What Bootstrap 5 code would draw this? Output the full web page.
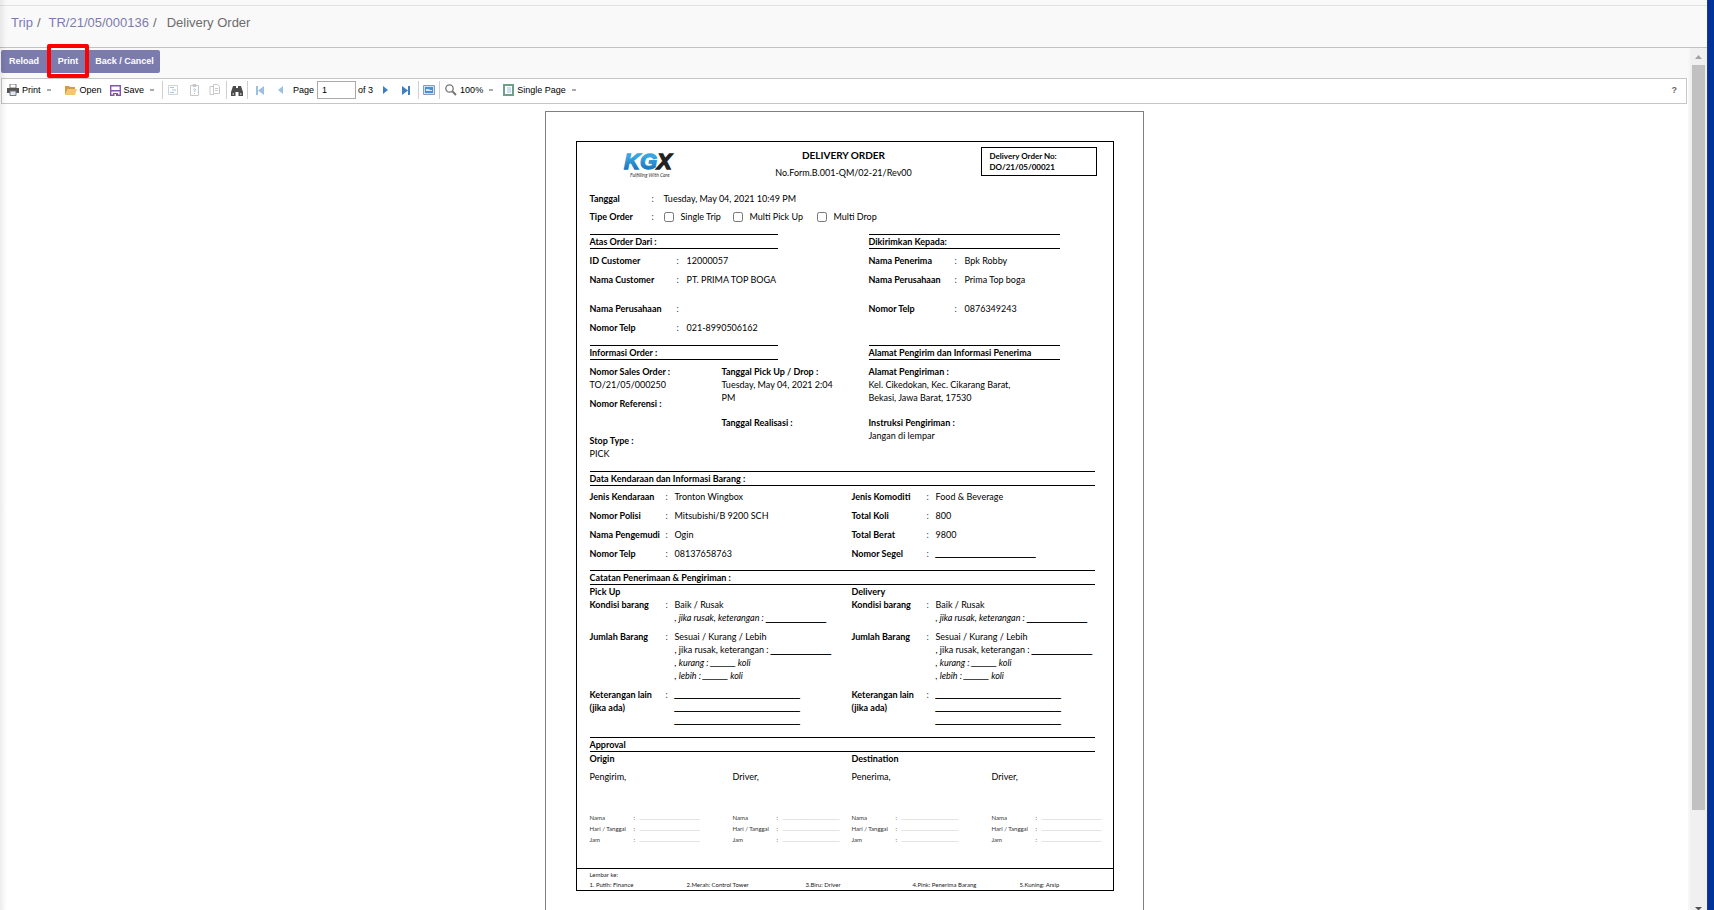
<!DOCTYPE html>
<html lang="id">
<head>
<meta charset="utf-8">
<meta name="viewport" content="width=device-width, initial-scale=1">
<title>Delivery Order</title>
<link href="https://cdn.jsdelivr.net/npm/bootstrap@5.3.0/dist/css/bootstrap.min.css" rel="stylesheet">
<style>
body{font-family:"Liberation Sans",Arial,sans-serif;font-size:9px;color:#000;background:#fff}
.app::before{content:"";position:absolute;left:0;top:0;bottom:0;width:7px;background:linear-gradient(90deg,rgba(0,0,0,.07),transparent);pointer-events:none;z-index:2}
.desktop-edge{width:7px;background:#00339a;border-left:1px solid #173c8c}
.menu-strip{height:6px;background:#f9f9f9;border-bottom:1px solid #e2e2e2}
.crumbs{height:42px;background:#f9f9f9;border-bottom:1px solid #c2c2c2;font-size:13px;padding:0 11px 8px;color:#6c6c6c}
.crumbs a{color:#7c7bad;text-decoration:none}
.crumbs .next{margin-left:10px}
.work{min-height:0}
.actions{background:#f9f9f9;height:30px;padding:2px 1px 0;align-items:flex-start}
.actions .btn{font-size:9px;font-weight:700;line-height:13px;padding:5px 0;height:23px;color:#fff;background:#7c7bad;border:0;border-radius:0;white-space:nowrap}
.actions .btn:first-child{border-radius:2px 0 0 2px;width:46px}
.actions .btn:last-child{border-radius:0 2px 2px 0;width:71px}
.actions .print-wrap{width:42px}
.actions .print-wrap .btn{width:42px;border-radius:0}
.ring{position:absolute;inset:-6px 0 -5px 0;border:4px solid #f00;border-radius:2px;pointer-events:none;z-index:3}
.viewer{border-right:2px solid #f7f7f7;min-width:0}
.tools{height:26px;border:1px solid #c6c6c6;background:#fff;margin:0 1px;padding:0 5px 2px;line-height:13px}
.tools button{border:0;background:none;padding:0;color:#000;display:flex;align-items:center;gap:3px;white-space:nowrap}
.tools button.help{color:#666}
.tools svg{flex:none}
.caret{width:4px;height:2px;background:#aaa;margin-left:3px}
.vsep{width:1px;height:18px;background:#cfcfcf}
.tools input{width:39px;height:18px;border:1px solid #aaa;padding:0 4px;font-size:9px;line-height:13px;border-radius:0;margin:0 2px 0 3px}
.gap-s{margin-left:5px}
.gap-m{margin-left:8px}
.gap-l{margin-left:10px}
.gap-xl{margin-left:14px}
.scrollrail{width:17px;background:#f0f0f0}
.thumb{width:13px;flex:0 0 86.4%;background:#c1c1c1}
.canvas{padding-top:7px}
.paper{width:100%;max-width:599px;min-height:842px;border:1px solid #808080;background:#fff;padding:29px 29px 31px 30px}
.sheet{border:1px solid #000;font-family:Lato,Carlito,sans-serif;font-size:9px;line-height:13px}
.sheet b{font-weight:700}
.inner{padding-left:13px}
.sheet-head{height:50px;display:grid;grid-template-columns:134px 240px 1fr;align-items:start}
.logo{margin:9px 0 0 32px;overflow:visible}
.doc-title{font-size:10px;line-height:14px;font-weight:700;padding-top:6px}
.doc-form{padding-top:4px}
.doc-no{width:116px;height:29px;border:1px solid #000;padding:3px 8px;font-size:8px;line-height:11px;font-weight:700;margin-top:5px}
.g-date{display:grid;grid-template-columns:62px 12px 1fr}
.opt{gap:7px}
.opt-1{width:69px}
.opt-2{width:84px}
.opt input{width:10px;height:10px;border:1px solid #777;border-radius:2px;margin:0;background:#fff}
.two-a{display:grid;grid-template-columns:279px 1fr}
.two-b{display:grid;grid-template-columns:262px 1fr}
.bar{border:solid #000;border-width:1px 0;line-height:13px;font-weight:700;margin-top:11px}
.bar-a{width:188px}
.bar-b{width:191px}
.bar-full{width:505px}
.bar-tight{margin-top:10px}
.kv-a{display:grid;grid-template-columns:87px 10px 1fr;margin-bottom:6px}
.two-a>div+div .kv-a{grid-template-columns:86px 10px 1fr}
.kv-b{display:grid;grid-template-columns:76px 9px 1fr;margin-bottom:6px}
.two-b>div+div .kv-b{grid-template-columns:75px 9px 1fr}
.tall{min-height:23px}
.three{display:grid;grid-template-columns:132px 147px 1fr}
.sp-4{margin-top:4px}
.sp-5{margin-top:5px}
.sp-6{margin-top:6px}
.sp-12{margin-top:12px}
.sp-24{margin-top:24px}
.blank{font-family:"Liberation Sans",Arial,sans-serif;text-shadow:0 0 0 #000,0 0 0 #000}
span .blank,i .blank{line-height:0}
.c{color:#246}
.sign{display:grid;grid-template-columns:143px 119px 140px 1fr}
.small-rows{font-size:6px;line-height:11px;color:#333;margin:29px 0 23px}
.small-rows .trio{display:grid;grid-template-columns:44px 6px 1fr;white-space:nowrap}
.small-rows .blank{color:#bbb;text-shadow:none}
.copies{border-top:1px solid #000;font-size:6px;line-height:11px;color:#222}
.copies-list{display:grid;grid-template-columns:97px 119px 107px 107px 1fr;line-height:10px}
</style>
<script src="https://cdn.jsdelivr.net/npm/bootstrap@5.3.0/dist/js/bootstrap.bundle.min.js"></script>
</head>
<body>
<div class="d-flex vh-100 overflow-hidden">
<div class="app position-relative d-flex flex-column flex-fill overflow-hidden">
  <div class="menu-strip flex-shrink-0"></div>
  <nav class="crumbs d-flex align-items-center flex-shrink-0" aria-label="breadcrumb">
    <a href="#">Trip</a><span class="ms-1">/</span><a href="#" class="ms-2">TR/21/05/000136</a><span class="ms-1">/</span><span class="next">Delivery Order</span>
  </nav>
  <div class="work d-flex flex-fill">
    <main class="viewer flex-fill">
      <div class="actions d-flex">
        <button class="btn" type="button">Reload</button>
        <div class="print-wrap position-relative"><button class="btn" type="button">Print</button><span class="ring"></span></div>
        <button class="btn" type="button">Back / Cancel</button>
      </div>
      <div class="tools d-flex align-items-center">
        <button type="button"><svg width="12" height="12" viewBox="0 0 12 12"><path d="M3 0h6v4H3z" fill="#fff" stroke="#777"/><path d="M0 4h12v5H0z" fill="#555"/><path d="M3 7h6v4.500H3z" fill="#dfeaf5" stroke="#777"/></svg>Print<span class="caret"></span></button>
        <button type="button" class="gap-l ps-1"><svg width="12" height="11" viewBox="0 0 12 11"><path d="M0 10V1h4l1 1h5v2H3z" fill="#d99c3d"/><path d="M0 10l3-6h9l-2 6z" fill="#f6c76f"/></svg>Open</button>
        <button type="button" class="gap-m"><svg width="11" height="11" viewBox="0 0 11 11"><path d="M.7.7h9.600v9.600H.7z" fill="#fff" stroke="#8455a8" stroke-width="1.400"/><path d="M1 5h9v1.500H1zM3 8h5v3H3z" fill="#8455a8"/><path d="M4.500 9H6v2H4.500z" fill="#fff"/></svg>Save<span class="caret"></span></button>
        <span class="vsep gap-m"></span>
        <button type="button" class="ms-1" aria-label="Bookmarks"><svg width="12" height="12" viewBox="0 0 12 12" fill="none"><path d="M1.500 1.500h9v9h-9z" stroke="#d0d3d6"/><path d="M3 3.500h4M5 6h4M3 8.500h4" stroke="#a9c3dc"/></svg></button>
        <button type="button" class="gap-l" aria-label="Parameters"><svg width="12" height="12" viewBox="0 0 12 12" fill="none" stroke="#c8c8c8"><path d="M1.500 1.500h8v10h-8zM4 .5h3v2H4z"/><path d="M4.300 5.500q1.200-1.500 2.400 0L5.500 7v1M5.500 9v1" stroke="#a9c3dc"/></svg></button>
        <button type="button" class="gap-m" aria-label="Resources"><svg width="12" height="12" viewBox="0 0 12 12" fill="none" stroke="#c8c8c8"><path d="M4 2.500H1v8h4M4.500.5h4l2 2v7h-6zM6 4.500h3M6 6.500h3"/></svg></button>
        <span class="vsep gap-s"></span>
        <button type="button" class="ms-1" aria-label="Find"><svg width="12" height="11" viewBox="0 0 12 11" fill="#4c4c4c"><path d="M2 1h3v2h2V1h3l2 6v4H7.500V7h-3v4H0V7z"/><path d="M1.500 8h1.500v2H1.500zM9 8h1.500v2H9z" fill="#aaa"/></svg></button>
        <span class="vsep ms-1"></span>
        <button type="button" class="gap-m" aria-label="First page"><svg width="8" height="9" viewBox="0 0 8 9" fill="#9dbfe0"><path d="M0 0h2v9H0zM8 0v9L2 4.500z"/></svg></button>
        <button type="button" class="gap-xl" aria-label="Previous page"><svg width="5" height="8" viewBox="0 0 5 8" fill="#9dbfe0"><path d="M5 0v8L0 4z"/></svg></button>
        <label for="pg" class="gap-l">Page</label><input id="pg" type="text" value="1"><span>of 3</span>
        <button type="button" class="gap-l" aria-label="Next page"><svg width="5" height="8" viewBox="0 0 5 8" fill="#3f7fc1"><path d="M0 0v8l5-4z"/></svg></button>
        <button type="button" class="gap-xl" aria-label="Last page"><svg width="8" height="9" viewBox="0 0 8 9" fill="#3f7fc1"><path d="M6 0h2v9H6zM0 0v9l6-4.500z"/></svg></button>
        <span class="vsep gap-m"></span>
        <button type="button" class="ms-1" aria-label="Full screen"><svg width="12" height="10" viewBox="0 0 12 10"><path d="M.5.500h11v9H.5z" fill="#cfe0f3" stroke="#8a9cb0"/><path d="M2 2h8v6H2z" fill="#4a90d9"/><path d="M3 4h3l1 1h2v1H3z" fill="#d7e7f8"/></svg></button>
        <span class="vsep ms-1"></span>
        <button type="button" class="gap-s"><svg width="12" height="12" viewBox="0 0 12 12" fill="none" stroke="#777"><circle cx="4.500" cy="4.500" r="3.700" stroke-width="1.300"/><path d="M7.300 7.300l3.700 3.700" stroke-width="2"/></svg>100%<span class="caret"></span></button>
        <button type="button" class="gap-l"><svg width="11" height="12" viewBox="0 0 11 12"><path d="M1 1h9v10H1z" fill="#fff" stroke="#6da08a" stroke-width="2"/><path d="M4 4h4M4 6h4M4 8h4" stroke="#9bbfe0"/></svg>Single Page<span class="caret"></span></button>
        <button type="button" class="help ms-auto me-1 fw-bold">?</button>
      </div>
      <div class="canvas d-flex justify-content-center">
        <article class="paper">
          <div class="sheet">
            <div class="inner">
              <header class="sheet-head">
                <svg class="logo" width="60" height="30" viewBox="0 0 60 30" role="img" aria-label="KGX">
                  <defs><linearGradient id="k" x2="0" y2="1"><stop offset=".3" stop-color="#3aa5e2"/><stop offset="1" stop-color="#0a66ae"/></linearGradient></defs>
                  <text x="2" y="18" font-family="Liberation Sans" font-size="22" font-weight="700" font-style="italic" fill="url(#k)" stroke="url(#k)" stroke-width="1.300">KG<tspan fill="#222" stroke="#222">X</tspan></text>
                  <text x="8" y="26" font-family="Lato" font-size="5" font-style="italic" fill="#333">Fulfilling With Care</text>
                </svg>
                <div class="text-center">
                  <div class="doc-title">DELIVERY ORDER</div>
                  <div class="doc-form">No.Form.B.001-QM/02-21/Rev00</div>
                </div>
                <div class="doc-no ms-auto me-3">Delivery Order No:<br>DO/21/05/00021</div>
              </header>
              <div class="g-date"><b>Tanggal</b><span class="c">:</span><span>Tuesday, May 04, 2021 10:49 PM</span></div>
              <div class="g-date sp-5"><b>Tipe Order</b><span class="c">:</span>
                <div class="d-flex">
                  <label class="opt opt-1 d-flex align-items-center"><input class="form-check-input" type="checkbox">Single Trip</label>
                  <label class="opt opt-2 d-flex align-items-center"><input class="form-check-input" type="checkbox">Multi Pick Up</label>
                  <label class="opt d-flex align-items-center"><input class="form-check-input" type="checkbox">Multi Drop</label>
                </div></div>

              <div class="two-a"><div class="bar bar-a">Atas Order Dari :</div><div class="bar bar-b">Dikirimkan Kepada:</div></div>
              <div class="two-a sp-5">
                <div>
                  <div class="kv-a"><b>ID Customer</b><span class="c">:</span><span>12000057</span></div>
                  <div class="kv-a tall"><b>Nama Customer</b><span class="c">:</span><span>PT. PRIMA TOP BOGA</span></div>
                  <div class="kv-a"><b>Nama Perusahaan</b><span class="c">:</span></div>
                  <div class="kv-a mb-0"><b>Nomor Telp</b><span class="c">:</span><span>021-8990506162</span></div>
                </div>
                <div>
                  <div class="kv-a"><b>Nama Penerima</b><span class="c">:</span><span>Bpk Robby</span></div>
                  <div class="kv-a tall"><b>Nama Perusahaan</b><span class="c">:</span><span>Prima Top boga</span></div>
                  <div class="kv-a"><b>Nomor Telp</b><span class="c">:</span><span>0876349243</span></div>
                </div>
              </div>

              <div class="two-a"><div class="bar bar-a">Informasi Order :</div><div class="bar bar-b">Alamat Pengirim dan Informasi Penerima</div></div>
              <div class="three sp-5">
                <div><b>Nomor Sales Order :</b><br>TO/21/05/000250
                  <div class="sp-6"><b>Nomor Referensi :</b></div>
                  <div class="sp-24"><b>Stop Type :</b><br>PICK</div></div>
                <div><b>Tanggal Pick Up / Drop :</b><br>Tuesday, May 04, 2021 2:04<br>PM
                  <div class="sp-12"><b>Tanggal Realisasi :</b></div></div>
                <div><b>Alamat Pengiriman :</b><br>Kel. Cikedokan, Kec. Cikarang Barat,<br>Bekasi, Jawa Barat, 17530
                  <div class="sp-12"><b>Instruksi Pengiriman :</b><br>Jangan di lempar</div></div>
              </div>

              <div class="bar bar-full">Data Kendaraan dan Informasi Barang :</div>
              <div class="two-b sp-4">
                <div>
                  <div class="kv-b"><b>Jenis Kendaraan</b><span class="c">:</span><span>Tronton Wingbox</span></div>
                  <div class="kv-b"><b>Nomor Polisi</b><span class="c">:</span><span>Mitsubishi/B 9200 SCH</span></div>
                  <div class="kv-b"><b>Nama Pengemudi</b><span class="c">:</span><span>Ogin</span></div>
                  <div class="kv-b mb-0"><b>Nomor Telp</b><span class="c">:</span><span>08137658763</span></div>
                </div>
                <div>
                  <div class="kv-b"><b>Jenis Komoditi</b><span class="c">:</span><span>Food &amp; Beverage</span></div>
                  <div class="kv-b"><b>Total Koli</b><span class="c">:</span><span>800</span></div>
                  <div class="kv-b"><b>Total Berat</b><span class="c">:</span><span>9800</span></div>
                  <div class="kv-b mb-0"><b>Nomor Segel</b><span class="c">:</span><span class="blank">____________________</span></div>
                </div>
              </div>

              <div class="bar bar-full bar-tight">Catatan Penerimaan &amp; Pengiriman :</div>
              <div class="two-b">
                <div><b>Pick Up</b>
                  <div class="kv-b"><b>Kondisi barang</b><span class="c">:</span><span>Baik / Rusak<br><i>, jika rusak, keterangan : </i><span class="blank">____________</span></span></div>
                  <div class="kv-b"><b>Jumlah Barang</b><span class="c">:</span><span>Sesuai / Kurang / Lebih<br>, jika rusak, keterangan : <span class="blank">____________</span><br><i>, kurang : <span class="blank">_____</span> koli<br>, lebih : <span class="blank">_____</span> koli</i></span></div>
                  <div class="kv-b mb-0"><b>Keterangan lain<br>(jika ada)</b><span class="c">:</span><span class="blank">_________________________<br>_________________________<br>_________________________</span></div>
                </div>
                <div><b>Delivery</b>
                  <div class="kv-b"><b>Kondisi barang</b><span class="c">:</span><span>Baik / Rusak<br><i>, jika rusak, keterangan : </i><span class="blank">____________</span></span></div>
                  <div class="kv-b"><b>Jumlah Barang</b><span class="c">:</span><span>Sesuai / Kurang / Lebih<br>, jika rusak, keterangan : <span class="blank">____________</span><br><i>, kurang : <span class="blank">_____</span> koli<br>, lebih : <span class="blank">_____</span> koli</i></span></div>
                  <div class="kv-b mb-0"><b>Keterangan lain<br>(jika ada)</b><span class="c">:</span><span class="blank">_________________________<br>_________________________<br>_________________________</span></div>
                </div>
              </div>

              <div class="bar bar-full bar-tight">Approval</div>
              <div class="two-b"><b>Origin</b><b>Destination</b></div>
              <div class="sign sp-5"><span>Pengirim,</span><span>Driver,</span><span>Penerima,</span><span>Driver,</span></div>
              <div class="sign small-rows">
                <div class="trio"><span>Nama</span><span>:</span><span class="blank">__________________</span><span>Hari / Tanggal</span><span>:</span><span class="blank">__________________</span><span>Jam</span><span>:</span><span class="blank">__________________</span></div>
                <div class="trio"><span>Nama</span><span>:</span><span class="blank">_________________</span><span>Hari / Tanggal</span><span>:</span><span class="blank">_________________</span><span>Jam</span><span>:</span><span class="blank">_________________</span></div>
                <div class="trio"><span>Nama</span><span>:</span><span class="blank">_________________</span><span>Hari / Tanggal</span><span>:</span><span class="blank">_________________</span><span>Jam</span><span>:</span><span class="blank">_________________</span></div>
                <div class="trio"><span>Nama</span><span>:</span><span class="blank">__________________</span><span>Hari / Tanggal</span><span>:</span><span class="blank">__________________</span><span>Jam</span><span>:</span><span class="blank">__________________</span></div>
              </div>
            </div>
            <footer class="copies"><div class="inner">Lembar ke:
              <div class="copies-list"><span>1. Putih: Finance</span><span>2.Merah: Control Tower</span><span>3.Biru: Driver</span><span>4.Pink: Penerima Barang</span><span>5.Kuning: Arsip</span></div></div></footer>
          </div>
        </article>
      </div>
    </main>
    <div class="scrollrail d-flex flex-column align-items-center flex-shrink-0">
      <svg class="flex-shrink-0" width="17" height="17" viewBox="0 0 17 17"><path d="M5 11h7L8.500 7z" fill="#a3a3a3"/></svg>
      <div class="thumb"></div>
      <svg class="mt-auto flex-shrink-0" width="17" height="4" viewBox="0 0 17 4"><path d="M5 1h7L8.500 4.500z" fill="#505050"/></svg>
    </div>
  </div>
</div>
<div class="desktop-edge flex-shrink-0"></div>
</div>
</body>
</html>
